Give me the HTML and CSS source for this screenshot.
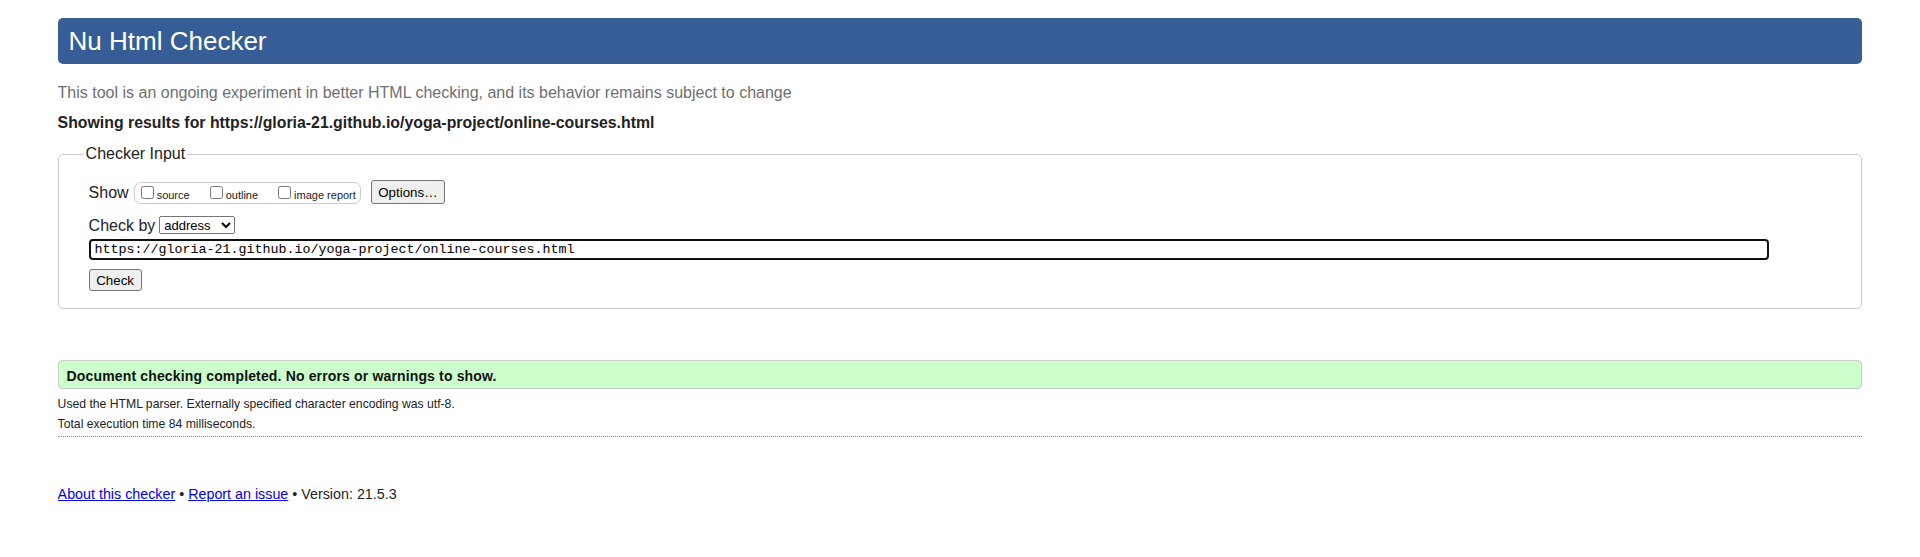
FILE: index.html
```html
<!DOCTYPE html>
<html lang="en">
<head>
<meta charset="utf-8">
<title>Showing results for https://gloria-21.github.io/yoga-project/online-courses.html - Nu Html Checker</title>
<link rel="stylesheet" href="styles.css">
</head>
<body>
<h1 class="title">Nu Html Checker</h1>
<p class="intro">This tool is an ongoing experiment in better HTML checking, and its behavior remains subject to change</p>
<p class="showing">Showing results for https://gloria-21.github.io/yoga-project/online-courses.html</p>
<form class="checker-form">
  <fieldset class="checker-input">
    <legend class="legend">Checker Input</legend>
    <div class="show-row">
      <span class="row-label show-label">Show</span>
      <span class="checkboxes"><label class="cb"><input type="checkbox" class="cb-input"><span>source</span></label><label class="cb"><input type="checkbox" class="cb-input"><span>outline</span></label><label class="cb cb-last"><input type="checkbox" class="cb-input"><span>image report</span></label></span>
      <button type="button" class="btn btn-options">Options…</button>
    </div>
    <div class="checkby-row">
      <label class="row-label" for="docselect">Check by</label>
      <select id="docselect" class="doc-select"><option>address</option><option>file upload</option><option>text input</option></select>
    </div>
    <div class="url-row">
      <input class="url" type="url" value="https://gloria-21.github.io/yoga-project/online-courses.html">
    </div>
    <div class="submit-row">
      <button type="button" class="btn btn-check">Check</button>
    </div>
  </fieldset>
</form>
<div class="result success"><strong>Document checking completed. No errors or warnings to show.</strong></div>
<div class="details">
  <p class="detail-line">Used the HTML parser. Externally specified character encoding was utf-8.</p>
  <p class="detail-line">Total execution time 84 milliseconds.</p>
</div>
<p class="footer"><a href="#" class="footer-link">About this checker</a> • <a href="#" class="footer-link">Report an issue</a> • Version: 21.5.3</p>
</body>
</html>
```
FILE: styles.css
```css
html {
  background: #fff;
}
body {
  margin: 0 3%;
  padding: 0 0 20px;
  font-family: "Liberation Sans", Arial, sans-serif;
  font-size: 16px;
  color: #222;
}
.title {
  margin: 18px 0 0;
  height: 46px;
  line-height: 46px;
  padding: 0 11px;
  background: #365d95;
  color: #fff;
  font-size: 26px;
  font-weight: normal;
  border-radius: 5px;
}
.intro {
  margin: 19px 0 0;
  line-height: 20px;
  color: #6f6f6f;
}
.showing {
  margin: 10px 0 0;
  line-height: 20px;
  font-size: 15.85px;
  font-weight: bold;
  color: #222;
}
.checker-form {
  margin: 11px 0 0;
}
.checker-input {
  margin: 0;
  padding: 13px 30px 17px;
  border: 1px solid #ccc;
  border-radius: 5px;
  min-width: 0;
}
.legend {
  padding: 0 2px;
  margin-left: -5px;
  line-height: 20px;
  font-size: 16px;
  color: #222;
}
.show-row {
  display: flex;
  align-items: flex-start;
  height: 26px;
}
.row-label {
  font-size: 16px;
  line-height: 20px;
  color: #222;
}
.show-label {
  margin-top: 6px;
}
.checkboxes {
  display: inline-block;
  margin: 5px 0 0 5px;
  padding: 0 4px 1px 2px;
  border: 1px solid #ccc;
  border-radius: 7px;
  font-size: 11px;
  line-height: 13px;
  color: #222;
  white-space: nowrap;
}
.cb {
  margin-right: 16px;
}
.cb-last {
  margin-right: 0;
}
.cb-input {
  width: 13px;
  height: 13px;
  margin: 3px 3px 3px 4px;
}
.btn {
  box-sizing: border-box;
  padding: 0;
  background: #efefef;
  border: 1px solid #767676;
  border-radius: 3px;
  font-family: "Liberation Sans", Arial, sans-serif;
  font-size: 13.33px;
  color: #000;
}
.btn-options {
  margin: 3px 0 0 10px;
  width: 74px;
  height: 24px;
}
.checkby-row {
  display: flex;
  align-items: flex-start;
  margin-top: 13px;
}
.doc-select {
  box-sizing: border-box;
  margin: 0 0 0 4px;
  width: 76px;
  height: 18px;
  font-family: "Liberation Sans", Arial, sans-serif;
  font-size: 13px;
}
.url-row {
  margin-top: 3px;
}
.url {
  box-sizing: border-box;
  display: block;
  width: calc(100% - 62px);
  height: 21px;
  margin: 0;
  padding: 0 4px;
  border: 2px solid #101010;
  border-radius: 4px;
  font-family: "Liberation Mono", "Courier New", monospace;
  font-size: 13.33px;
  color: #000;
  outline: none;
}
.submit-row {
  margin-top: 9px;
}
.btn-check {
  display: block;
  width: 53px;
  height: 22px;
}
.result {
  margin-top: 51px;
  padding: 4px 8px 0;
  line-height: 23px;
  border: 1px solid #ccc;
  border-radius: 4px;
  font-size: 14px;
  letter-spacing: 0.15px;
}
.success {
  background: #ccffcc;
  color: #111;
}
.details {
  margin-top: 5px;
  padding-bottom: 2px;
  border-bottom: 1px dotted #888;
}
.detail-line {
  margin: 0;
  font-size: 12.2px;
  line-height: 20px;
  color: #222;
}
.footer {
  margin: 47px 0 0;
  font-size: 14.3px;
  line-height: 20px;
  color: #222;
}
.footer-link {
  color: #0000ee;
}
```
